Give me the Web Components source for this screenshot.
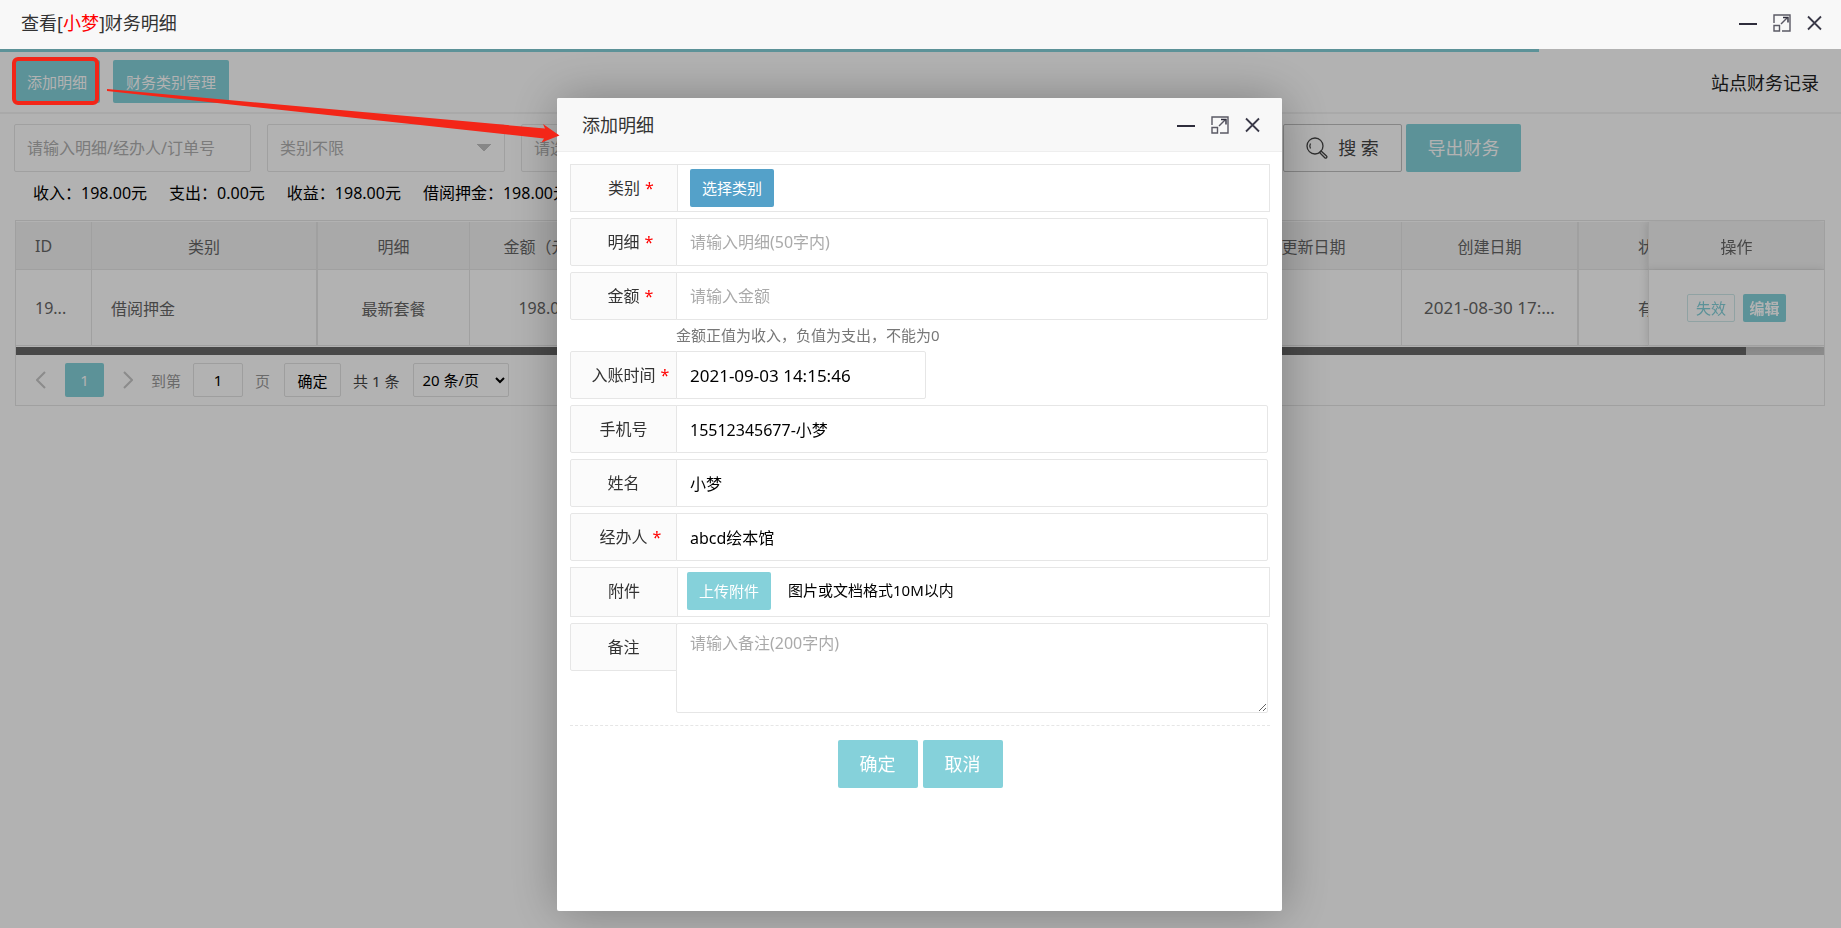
<!DOCTYPE html>
<html lang="zh-CN">
<head>
<meta charset="utf-8">
<title>财务明细</title>
<style>
  body { margin: 0; background: #fff; font-family: "Noto Sans", "Noto Sans CJK SC", sans-serif; font-size: 16px; color: #333; }
</style>
</head>
<body>
<finance-page></finance-page>

<script>
const base = `
  *, *::before, *::after { box-sizing: border-box; }
  button, input, select, textarea { font: inherit; color: inherit; margin: 0; }
  button { cursor: pointer; }
`;

function define(name, css, html, ready) {
  const tpl = document.createElement('template');
  customElements.define(name, class extends HTMLElement {
    constructor() {
      super();
      tpl.innerHTML = `<style>${base}${css}</style>${typeof html === 'function' ? html(this) : html}`;
      this.attachShadow({ mode: 'open' }).append(tpl.content.cloneNode(true));
      if (ready) ready(this);
    }
  });
}

/* Minimise, maximise and close buttons */
define('window-controls', `
  :host { display: flex; align-items: center; gap: 16px; }
  button { border: 0; padding: 0; background: none; height: 18px; display: block; }
  svg { display: block; }
`, `
  <button aria-label="最小化"><svg width="18" height="18"><path d="M0 10h18" stroke="#2e2d3c" stroke-width="2"/></svg></button>
  <button aria-label="最大化"><svg width="18" height="18" fill="none" stroke="#5a5964" stroke-width="1.4">
    <path d="M1 9V1h16v16H9"/><path d="M1 11.500h5.500v5.500H1z"/><path d="M8 10l6-6"/><path d="M10 3.500h5v5" stroke="#2e2d3c"/></svg></button>
  <button aria-label="关闭"><svg width="15" height="18" fill="none" stroke="#3a3948" stroke-width="1.800"><path d="M1 2.500l13 13M14 2.500l-13 13"/></svg></button>
`);

/* Window title bar */
define('title-bar', `
  :host { display: flex; align-items: center; justify-content: space-between; background: #f8f8f8; font-size: 18px; line-height: 24px; }
  ::slotted(em) { font-style: normal; color: #f00; }
`, `<div><slot></slot></div><window-controls></window-controls>`);

/* Button: size and tone come from attributes */
define('app-button', `
  :host { display: inline-block; --h: 48px; --bg: #85d1da; --px: 22px; font-size: 18px; }
  :host([size="md"]) { --h: 43px; --px: 13px; font-size: 15px; }
  :host([size="sm"]) { --h: 38px; --px: 12px; font-size: 15px; }
  :host([size="xs"]) { --h: 28px; --px: 6px; font-size: 15px; }
  :host([tone="blue"]) { --bg: #54a1c9; }
  button { display: flex; align-items: center; justify-content: center; gap: 10px; height: var(--h); width: 100%; padding: 0 var(--px); border: 0; border-radius: 2px; background: var(--bg); color: #fff; white-space: nowrap; line-height: 20px; }
  :host([tone="plain"]) button { background: #fff; color: #444; border: 1px solid #c0c0c0; }
  :host([tone="outline"]) button { background: #fff; color: #85d1da; border: 1px solid #cfe9ea; }
`, `<button><slot name="icon"></slot><slot></slot></button>`);

/* Toolbar and search filters */
define('finance-toolbar', `
  :host { display: block; }
  .actions { display: flex; align-items: center; height: 65px; padding: 2px 22px 0 14px; border-bottom: 2px solid #f2f2f2; }
  .actions app-button + app-button { margin-left: 13px; }
  a { margin-left: auto; font-size: 18px; color: #222; text-decoration: none; }
  .filters { display: flex; gap: 16px; padding: 10px 320px 0 14px; }
  .filters input, .filters select { width: 237px; height: 48px; padding: 0 12px; border: 1px solid #e6e6e6; border-radius: 2px; background: #fff; color: #b0b0b0; outline: 0; }
  input::placeholder { color: #b0b0b0; opacity: 1; }
  .filters select { appearance: none; width: 238px;
    background: linear-gradient(to bottom right, #c2c2c2 50%, transparent 50%) right 13px center / 7px 8px no-repeat,
      linear-gradient(to bottom left, #c2c2c2 50%, transparent 50%) right 20px center / 7px 8px no-repeat, #fff; }
  .filters input.wide { flex: 1; width: auto; min-width: 0; }
  .search { display: flex; gap: 4px; }
  .search app-button:first-child { width: 119px; }
  .search app-button:last-child { width: 115px; }
  dl { display: flex; gap: 22px; margin: 0; padding: 9px 33px 15px; line-height: 24px; color: #000; }
  dl div { display: flex; white-space: nowrap; }
  dd { margin: 0; }
`, `
  <div class="actions">
    <app-button size="md">添加明细</app-button>
    <app-button size="md">财务类别管理</app-button>
    <a href="#">站点财务记录</a>
  </div>
  <div class="filters">
    <input type="text" aria-label="关键字" placeholder="请输入明细/经办人/订单号">
    <select aria-label="类别"><option>类别不限</option></select>
    <input class="wide" type="text" aria-label="日期" placeholder="请选择">
    <div class="search">
      <app-button tone="plain"><svg slot="icon" width="22" height="24" fill="none" stroke="#444" stroke-width="1.300">
        <ellipse cx="9" cy="10" rx="8" ry="8"/><path d="M4.500 12.500a5 5 0 0 1 0-5"/><path d="M13.500 16.500l1.500-1.500 5.500 5a1.200 1.200 0 0 1-1.700 1.700z"/></svg>搜 索</app-button>
      <app-button>导出财务</app-button>
    </div>
  </div>
  <dl>
    <div><dt>收入：</dt><dd>198.00元</dd></div>
    <div><dt>支出：</dt><dd>0.00元</dd></div>
    <div><dt>收益：</dt><dd>198.00元</dd></div>
    <div><dt>借阅押金：</dt><dd>198.00元</dd></div>
  </dl>
`);

/* Pagination */
define('page-nav', `
  :host { display: flex; align-items: center; height: 50px; padding-left: 20px; font-size: 15px; color: #444; }
  button, input, select { height: 34px; border: 1px solid #e2e2e2; border-radius: 2px; background: #fff; color: #000; }
  button.arrow { border: 0; width: 10px; padding: 0; }
  svg { display: block; }
  button.current { width: 39px; margin: 0 19px; padding: 0; border: 0; background: #85d1da; color: #fff; }
  label { display: flex; align-items: center; gap: 12px; margin-left: 18px; color: #999; }
  input { width: 50px; text-align: center; padding: 0; }
  .go { width: 57px; padding: 0; margin: 0 12px 0 14px; }
  select { width: 96px; margin-left: 14px; padding: 0 4px; }
`, `
  <button class="arrow" aria-label="上一页"><svg width="10" height="34" fill="none" stroke="#c8c8c8" stroke-width="2"><path d="M9 9l-8 8 8 8"/></svg></button>
  <button class="current">1</button>
  <button class="arrow" aria-label="下一页"><svg width="10" height="34" fill="none" stroke="#c8c8c8" stroke-width="2"><path d="M1 9l8 8-8 8"/></svg></button>
  <label>到第<input type="text" value="1">页</label>
  <button class="go">确定</button>
  <span>共 1 条</span>
  <select aria-label="每页条数"><option>20 条/页</option></select>
`);

/* Records table with a pinned action column */
define('finance-table', `
  :host { display: block; margin: 0 16px 0 15px; border: 1px solid #e6e6e6; color: #666; }
  .scroller { overflow: hidden; padding-top: 1px; }
  table { width: calc(100% + 82px); table-layout: fixed; border-collapse: separate; border-spacing: 0; }
  th, td { border: 0 solid #e6e6e6; border-width: 0 1px 1px 0; font-weight: 400; text-align: center; padding: 0 19px; white-space: nowrap; overflow: hidden; text-overflow: ellipsis; }
  th { height: 48px; background: #f2f2f2; }
  td { height: 76px; background: #fff; }
  td.left, th.left { text-align: left; }
  td.left.id { padding-right: 8px; }
  .thick { border-right-width: 2px; }
  .date { font-size: 17px; padding: 0 10px; }
  .pinned { position: sticky; right: 0; border-left-width: 1px; border-right: 0; overflow: visible; box-shadow: -1px 0 8px rgba(0,0,0,.12); }
  .ops { display: flex; justify-content: center; align-items: center; gap: 8px; }
  .ops app-button:first-child { width: 48px; }
  .ops app-button:last-child { width: 43px; font-weight: 700; }
  .bar { height: 8px; margin-top: 1px; background: #c8c8c8; }
  .thumb { width: 95.700%; height: 8px; background: #676767; }
`, `
  <div class="scroller">
    <table>
      <colgroup><col style="width:76px"><col style="width:226px"><col style="width:152px"><col style="width:148px"><col><col style="width:176px"><col style="width:177px"><col style="width:151px"><col style="width:176px"></colgroup>
      <thead><tr><th class="left">ID</th><th class="thick">类别</th><th>明细</th><th>金额（元）</th><th></th><th>更新日期</th><th class="thick">创建日期</th><th>状态</th><th class="pinned">操作</th></tr></thead>
      <tbody><tr><td class="left id">19...</td><td class="left thick">借阅押金</td><td>最新套餐</td><td>198.00</td><td></td><td></td><td class="date thick">2021-08-30 17:...</td><td>有效</td>
        <td class="pinned"><div class="ops"><app-button size="xs" tone="outline">失效</app-button><app-button size="xs">编辑</app-button></div></td></tr></tbody>
    </table>
    <div class="bar"><div class="thumb"></div></div>
  </div>
  <page-nav></page-nav>
`);

/* One labelled form row: input, textarea or a bordered box with slotted content */
define('form-row', `
  :host { display: flex; align-items: flex-start; margin-right: 2px; line-height: 24px; }
  label { position: relative; flex: none; width: 107px; height: 48px; line-height: 46px; text-align: center; background: #fbfbfb; border: 1px solid #e6e6e6; border-radius: 2px 0 0 2px; }
  .star { position: absolute; color: #f00; padding-left: 5px; }
  input, textarea { flex: 1; min-width: 0; height: 48px; margin-left: -1px; padding: 0 13px; border: 1px solid #e6e6e6; border-radius: 0 2px 2px 0; background: #fff; color: #000; outline: 0; }
  input::placeholder, textarea::placeholder { color: #aaa; opacity: 1; }
  textarea { display: block; height: 90px; padding: 7px 13px; line-height: 24px; border-radius: 2px; }
  :host([short]) input { flex: none; width: 250px; font-size: 17px; }
  :host([kind="box"]) { border: 1px solid #e6e6e6; margin-right: 0; align-items: stretch; height: 48px; }
  :host([kind="box"][tall]) { height: 50px; }
  :host([kind="box"]) label { height: auto; border-width: 0 1px 0 0; border-radius: 0; }
  .content { display: flex; align-items: flex-start; gap: 17px; padding: 4px 12px; font-size: 15px; color: #000; line-height: 36px; }
  :host([tall]) .content { padding: 4px 9px; }
`, el => {
  const kind = el.getAttribute('kind');
  const text = el.getAttribute('label');
  const star = el.hasAttribute('required') ? '<span class="star">*</span>' : '';
  const ph = el.getAttribute('placeholder') || '';
  const val = el.getAttribute('value') || '';
  const field = kind === 'box' ? '<div class="content" id="f"><slot></slot></div>'
    : kind === 'area' ? `<textarea id="f" placeholder="${ph}"></textarea>`
    : `<input id="f" type="text" placeholder="${ph}" value="${val}">`;
  return `<label for="f">${text}${star}</label>${field}`;
});

/* Dialog window */
define('modal-dialog', `
  :host { display: flex; flex-direction: column; width: 725px; background: #fff; border-radius: 2px; box-shadow: 1px 1px 50px rgba(0,0,0,.3); }
  title-bar { box-sizing: border-box; height: 54px; padding: 0 22px 0 25px; border-bottom: 1px solid #eee; border-radius: 2px 2px 0 0; }
  form { display: flex; flex-direction: column; gap: 6px; padding: 12px 12px 0 13px; }
`, el => `<title-bar>${el.getAttribute('heading')}</title-bar><form onsubmit="return false"><slot></slot></form>`);

/* Whole page: dimmed content, dialog layer and pointer annotation */
define('finance-page', `
  :host { display: flex; flex-direction: column; min-height: 100vh; position: relative; }
  .top { height: 49px; padding: 0 19px 4px 21px; }
  main { flex: 1; }
  .progress { height: 3px; width: 83.600%; background: #85d1da; margin-bottom: -3px; }
  .shade { position: absolute; inset: 49px 0 0 0; display: flex; justify-content: center; padding: 49px 2px 17px 0; background: rgba(0,0,0,.3); overflow: hidden; }
  .hint { margin: 0; padding-left: 106px; font-size: 15px; line-height: 19px; color: #777; }
  .foot { display: flex; justify-content: center; gap: 5px; margin-top: 6px; padding-top: 14px; border-top: 1px dashed #e6e6e6; }
  .foot app-button { width: 80px; }
  .pointer { position: absolute; left: 0; top: 0; pointer-events: none; }
`, `
  <title-bar class="top">查看[<em>小梦</em>]财务明细</title-bar>
  <main>
    <div class="progress"></div>
    <finance-toolbar></finance-toolbar>
    <finance-table></finance-table>
  </main>
  <div class="shade">
    <modal-dialog heading="添加明细">
      <form-row kind="box" label="类别" required><app-button size="sm" tone="blue">选择类别</app-button></form-row>
      <form-row label="明细" required placeholder="请输入明细(50字内)"></form-row>
      <form-row label="金额" required placeholder="请输入金额"></form-row>
      <p class="hint">金额正值为收入，负值为支出，不能为0</p>
      <form-row short label="入账时间" required value="2021-09-03 14:15:46"></form-row>
      <form-row label="手机号" value="15512345677-小梦"></form-row>
      <form-row label="姓名" value="小梦"></form-row>
      <form-row label="经办人" required value="abcd绘本馆"></form-row>
      <form-row kind="box" tall label="附件"><app-button size="sm">上传附件</app-button><span>图片或文档格式10M以内</span></form-row>
      <form-row kind="area" label="备注" placeholder="请输入备注(200字内)"></form-row>
      <div class="foot"><app-button>确定</app-button><app-button>取消</app-button></div>
    </modal-dialog>
  </div>
  <svg class="pointer" width="570" height="160" aria-hidden="true">
    <rect x="14" y="59" width="83" height="44" rx="4" fill="none" stroke="#f32618" stroke-width="4"/>
    <path d="M107 89L545 128.500l-2-4.500 16.500 11.500L541.500 142.500l2.500-4L107 91z" fill="#f32618"/>
  </svg>
`);
</script>
</body>
</html>
